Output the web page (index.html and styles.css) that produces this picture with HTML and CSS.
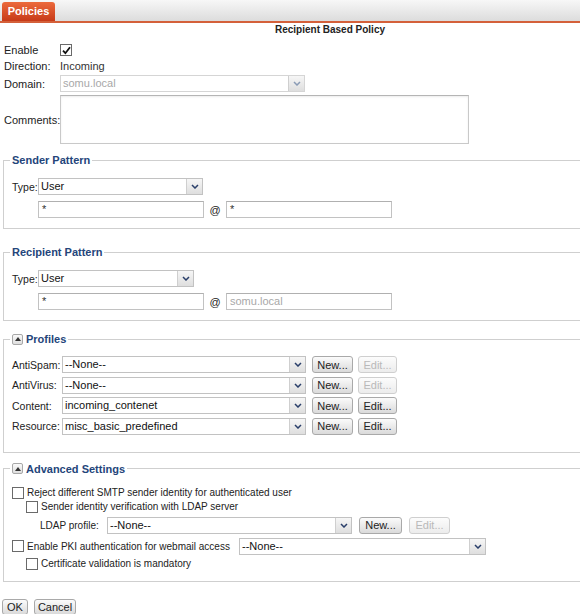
FILE: index.html
```html
<!DOCTYPE html>
<html lang="en">
<head>
    <meta charset="UTF-8">
    <title>Recipient Based Policy</title>
    <link rel="stylesheet" href="styles.css">
</head>
<body>
    <div class="tabbar">
        <span class="tab">Policies</span>
    </div>

    <div class="page">
        <div class="title">Recipient Based Policy</div>

        <div class="general">
            <div class="row row-text">
                <span class="label">Enable</span>
                <span class="check checked"><svg width="9" height="9" viewBox="0 0 9 9"><path d="M1 4.6 L3.4 7.2 L8 1.2" fill="none" stroke="#111" stroke-width="1.8"/></svg></span>
            </div>
            <div class="row row-text">
                <span class="label">Direction:</span>
                <span class="value">Incoming</span>
            </div>
            <div class="row row-field">
                <span class="label">Domain:</span>
                <div class="select disabled w-domain"><span class="select-text">somu.local</span><span class="arrow"><svg width="8" height="5" viewBox="0 0 8 5"><path d="M1 1 L4 4 L7 1" fill="none" stroke="#8a9bb5" stroke-width="1.5"/></svg></span></div>
            </div>
            <div class="row row-comments">
                <span class="label">Comments:</span>
                <div class="textarea"></div>
            </div>
        </div>

        <fieldset class="group group-sender">
            <legend>Sender Pattern</legend>
            <div class="row row-field">
                <span class="type-label">Type:</span>
                <div class="select w-type"><span class="select-text">User</span><span class="arrow"><svg width="8" height="5" viewBox="0 0 8 5"><path d="M1 1 L4 4 L7 1" fill="none" stroke="#2a3f6a" stroke-width="1.5"/></svg></span></div>
            </div>
            <div class="row row-field pattern">
                <div class="input"><span>*</span></div>
                <span class="at">@</span>
                <div class="input"><span>*</span></div>
            </div>
        </fieldset>

        <fieldset class="group group-recipient">
            <legend>Recipient Pattern</legend>
            <div class="row row-field">
                <span class="type-label">Type:</span>
                <div class="select w-type-short"><span class="select-text">User</span><span class="arrow"><svg width="8" height="5" viewBox="0 0 8 5"><path d="M1 1 L4 4 L7 1" fill="none" stroke="#2a3f6a" stroke-width="1.5"/></svg></span></div>
            </div>
            <div class="row row-field pattern">
                <div class="input"><span>*</span></div>
                <span class="at">@</span>
                <div class="input disabled"><span>somu.local</span></div>
            </div>
        </fieldset>

        <fieldset class="group group-profiles">
            <legend><span class="toggle"><svg width="6" height="4" viewBox="0 0 6 4"><path d="M0 4 L3 0 L6 4 Z" fill="#333"/></svg></span>Profiles</legend>
            <div class="profile-rows">
                <div class="row row-field">
                    <span class="profile-label">AntiSpam:</span>
                    <div class="select w-profile"><span class="select-text">--None--</span><span class="arrow"><svg width="8" height="5" viewBox="0 0 8 5"><path d="M1 1 L4 4 L7 1" fill="none" stroke="#2a3f6a" stroke-width="1.5"/></svg></span></div>
                    <span class="btn btn-new">New...</span>
                    <span class="btn btn-edit disabled">Edit...</span>
                </div>
                <div class="row row-field">
                    <span class="profile-label">AntiVirus:</span>
                    <div class="select w-profile"><span class="select-text">--None--</span><span class="arrow"><svg width="8" height="5" viewBox="0 0 8 5"><path d="M1 1 L4 4 L7 1" fill="none" stroke="#2a3f6a" stroke-width="1.5"/></svg></span></div>
                    <span class="btn btn-new">New...</span>
                    <span class="btn btn-edit disabled">Edit...</span>
                </div>
                <div class="row row-field">
                    <span class="profile-label">Content:</span>
                    <div class="select w-profile"><span class="select-text">incoming_contenet</span><span class="arrow"><svg width="8" height="5" viewBox="0 0 8 5"><path d="M1 1 L4 4 L7 1" fill="none" stroke="#2a3f6a" stroke-width="1.5"/></svg></span></div>
                    <span class="btn btn-new">New...</span>
                    <span class="btn btn-edit">Edit...</span>
                </div>
                <div class="row row-field">
                    <span class="profile-label">Resource:</span>
                    <div class="select w-profile"><span class="select-text">misc_basic_predefined</span><span class="arrow"><svg width="8" height="5" viewBox="0 0 8 5"><path d="M1 1 L4 4 L7 1" fill="none" stroke="#2a3f6a" stroke-width="1.5"/></svg></span></div>
                    <span class="btn btn-new">New...</span>
                    <span class="btn btn-edit">Edit...</span>
                </div>
            </div>
        </fieldset>

        <fieldset class="group group-advanced">
            <legend><span class="toggle"><svg width="6" height="4" viewBox="0 0 6 4"><path d="M0 4 L3 0 L6 4 Z" fill="#333"/></svg></span>Advanced Settings</legend>
            <div class="row row-check">
                <span class="check"></span>
                <span>Reject different SMTP sender identity for authenticated user</span>
            </div>
            <div class="row row-check indent">
                <span class="check"></span>
                <span>Sender identity verification with LDAP server</span>
            </div>
            <div class="row row-field ldap">
                <span class="ldap-label">LDAP profile:</span>
                <div class="select w-ldap"><span class="select-text">--None--</span><span class="arrow"><svg width="8" height="5" viewBox="0 0 8 5"><path d="M1 1 L4 4 L7 1" fill="none" stroke="#2a3f6a" stroke-width="1.5"/></svg></span></div>
                <span class="btn btn-new wide">New...</span>
                <span class="btn btn-edit wide disabled">Edit...</span>
            </div>
            <div class="row row-field pki">
                <span class="check"></span>
                <span class="pki-label">Enable PKI authentication for webmail access</span>
                <div class="select w-pki"><span class="select-text">--None--</span><span class="arrow"><svg width="8" height="5" viewBox="0 0 8 5"><path d="M1 1 L4 4 L7 1" fill="none" stroke="#2a3f6a" stroke-width="1.5"/></svg></span></div>
            </div>
            <div class="row row-check indent">
                <span class="check"></span>
                <span>Certificate validation is mandatory</span>
            </div>
        </fieldset>

        <div class="actions">
            <span class="btn btn-ok">OK</span>
            <span class="btn btn-cancel">Cancel</span>
        </div>
    </div>
</body>
</html>
```

FILE: styles.css
```css
* {
    margin: 0;
    padding: 0;
    box-sizing: border-box;
}

body {
    font-family: 'Liberation Sans', Arial, sans-serif;
    font-size: 11px;
    color: #222;
    background: #fff;
    width: 580px;
    height: 614px;
    overflow: hidden;
}

/* tab strip */
.tabbar {
    width: 660px;
    height: 23px;
    padding: 2px 0 0 2px;
    background: linear-gradient(#f7f7f7, #dcdcdc);
    border-bottom: 2px solid #d4603a;
}

.tab {
    display: inline-block;
    width: 53px;
    height: 19px;
    line-height: 19px;
    text-align: center;
    color: #fff;
    font-weight: bold;
    font-size: 11px;
    background: linear-gradient(#ec6a3c, #c73a18);
    border-radius: 3px 3px 0 0;
}

.page {
    width: 660px;
    padding: 0 3px;
}

.title {
    text-align: center;
    font-weight: bold;
    font-size: 10px;
    line-height: 14px;
    height: 14px;
    margin-bottom: 5px;
}

.row {
    display: flex;
    align-items: center;
}

.general .label {
    width: 57px;
    padding-left: 1px;
    flex-shrink: 0;
}

.row-text {
    height: 16px;
}

.row-field {
    height: 17px;
}

.general .row-field {
    margin-top: 1px;
}

.row-comments {
    margin-top: 3px;
    height: 49px;
}

.textarea {
    width: 409px;
    height: 49px;
    border: 1px solid #c9c9c9;
    border-top-color: #b5b5b5;
    box-shadow: inset 0 1px 2px rgba(0, 0, 0, 0.08);
}

.value {
    color: #333;
}

/* checkbox */
.check {
    display: inline-flex;
    align-items: center;
    justify-content: center;
    width: 12px;
    height: 12px;
    border: 1px solid #6a6a6a;
    background: #fff;
    flex-shrink: 0;
}

/* select + input */
.select {
    display: flex;
    height: 17px;
    border: 1px solid #c2c2c2;
    background: #fff;
    flex-shrink: 0;
}

.select-text {
    flex: 1;
    padding-left: 2px;
    line-height: 15px;
    color: #111;
    overflow: hidden;
    white-space: nowrap;
}

.arrow {
    width: 16px;
    display: flex;
    align-items: center;
    justify-content: center;
    border-left: 1px solid #cfcfcf;
    background: linear-gradient(#f6f6f6, #dedede);
}

.select.disabled .select-text {
    color: #a8a8a8;
}

.select.disabled {
    border-color: #d5d5d5;
}

.w-domain { width: 245px; }
.w-type { width: 165px; }
.w-type-short { width: 156px; }
.w-profile { width: 244px; }
.w-ldap { width: 245px; }
.w-pki { width: 247px; }

.input {
    width: 166px;
    height: 17px;
    border: 1px solid #c2c2c2;
    border-top-color: #b0b0b0;
    padding-left: 3px;
    line-height: 15px;
    color: #333;
}

.input.disabled {
    color: #a8a8a8;
}

.at {
    width: 22px;
    text-align: center;
    font-size: 11px;
}

/* fieldsets */
.group {
    border: 1px solid #cfcfcf;
    padding: 0 8px;
    width: 654px;
}

.group legend {
    margin-left: -2px;
    padding: 0 2px;
    height: 14px;
    line-height: 14px;
    font-weight: bold;
    font-size: 11px;
    color: #24457a;
    display: flex;
    align-items: center;
}

.toggle {
    display: inline-flex;
    align-items: center;
    justify-content: center;
    width: 11px;
    height: 11px;
    border: 1px solid #a8a8a8;
    border-radius: 2px;
    background: linear-gradient(#fafafa, #dedede);
    margin-right: 3px;
}

.type-label {
    width: 26px;
    font-size: 10.5px;
}

.pattern {
    margin-top: 6px;
    padding-left: 26px;
}

.group-sender {
    margin-top: 9px;
    padding-top: 11px;
    padding-bottom: 10px;
}

.group-recipient {
    margin-top: 16px;
    padding-top: 11px;
    padding-bottom: 10px;
}

.group-profiles {
    margin-top: 11px;
    padding-top: 10px;
    padding-bottom: 17px;
}

.profile-rows {
    display: flex;
    flex-direction: column;
    gap: 3.67px;
}

.profile-label {
    width: 50px;
    font-size: 10.5px;
    flex-shrink: 0;
}

/* buttons */
.btn {
    display: inline-flex;
    align-items: center;
    justify-content: center;
    height: 17px;
    border: 1px solid #a9a9a9;
    border-radius: 3px;
    background: linear-gradient(#fbfbfb, #dadada);
    color: #222;
    font-size: 11px;
    flex-shrink: 0;
}

.btn.disabled {
    color: #b9b9b9;
    border-color: #cfcfcf;
    background: linear-gradient(#fcfcfc, #ececec);
}

.btn-new {
    width: 41px;
    margin-left: 6px;
}

.btn-edit {
    width: 39px;
    margin-left: 5px;
}

.btn-new.wide {
    width: 43px;
    margin-left: 7px;
}

.btn-edit.wide {
    width: 41px;
    margin-left: 7px;
}

/* advanced settings */
.group-advanced {
    margin-top: 9px;
    padding-top: 10px;
    padding-bottom: 10px;
    font-size: 10px;
}

.group-advanced .select-text,
.group-advanced .btn {
    font-size: 11px;
}

.row-check {
    height: 14px;
    gap: 3px;
}

.indent {
    padding-left: 14px;
}

.ldap {
    margin-top: 3px;
    padding-left: 28px;
}

.ldap-label {
    width: 67px;
}

.pki {
    margin-top: 4px;
    gap: 3px;
}

.pki-label {
    width: 209px;
    white-space: nowrap;
}

.row-check.indent:last-child {
    margin-top: 2px;
}

.actions {
    margin-top: 17px;
    display: flex;
    gap: 6px;
    margin-left: -1px;
}

.btn-ok {
    width: 26px;
    height: 16px;
}

.btn-cancel {
    width: 42px;
    height: 16px;
}
```
